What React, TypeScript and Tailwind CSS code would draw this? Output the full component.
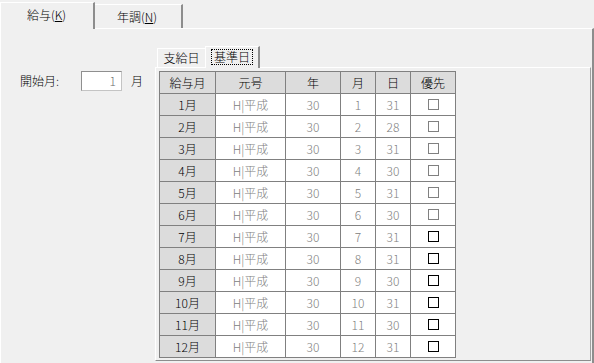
import React from 'react'

const days = [31, 28, 31, 30, 31, 30, 31, 31, 30, 31, 30, 31]

const headers = ['給与月', '元号', '年', '月', '日', '優先']

export default function App() {
  return (
    <div className="w-[594px] h-[363px] overflow-hidden bg-[#f0f0f0] flex flex-col font-['Noto_Sans_CJK_JP','Liberation_Sans',sans-serif] font-light text-[12px] leading-[14px] text-black">
      {/* outer tabs */}
      <div className="h-[28px] flex items-end shrink-0">
        <div className="relative z-10 w-[95px] h-[27px] -mb-px bg-[#f0f0f0] border-l border-t border-white border-r-2 border-r-[#8d8d8d] flex items-center justify-start pl-[26px] pb-[3px]">
          <span>給与(<span className="underline">K</span>)</span>
        </div>
        <div className="w-[88px] h-[24px] border-t border-white border-r-2 border-r-[#8d8d8d] flex items-center justify-start pl-[22px]">
          <span>年調(<span className="underline">N</span>)</span>
        </div>
      </div>

      {/* outer panel */}
      <div className="flex-1 flex border-t border-l border-white border-r-2 border-r-[#8d8d8d]">
        <div className="w-[154px] shrink-0 pt-[42px]">
          <div className="flex items-center h-[20px]">
            <span className="ml-[19px] w-[61px]">開始月:</span>
            <div className="w-[41px] h-[20px] bg-white border border-t-[#8f8f8f] border-l-[#8f8f8f] border-b-[#c4c4c4] border-r-[#c4c4c4] flex items-center justify-end pr-[5px] text-[#6d6d6d]">
              1
            </div>
            <span className="ml-[9px]">月</span>
          </div>
        </div>

        {/* inner tab control */}
        <div className="w-[436px] shrink-0 pt-[16px] flex flex-col">
          <div className="h-[22px] flex items-end pl-[2px] shrink-0">
            <div className="w-[48px] h-[19px] border-t border-l border-white flex items-center justify-center">
              支給日
            </div>
            <div className="relative z-10 w-[55px] h-[22px] -mb-px bg-[#f0f0f0] border-t border-l border-white border-r-2 border-r-[#8d8d8d] flex items-start justify-center pt-[2px]">
              <span className="px-[2px] h-[16px] flex items-center border border-dotted border-black">基準日</span>
            </div>
          </div>
          <div className="h-[294px] border-t border-l border-white border-b border-r border-b-[#8d8d8d] border-r-[#a0a0a0] pl-[3px] pt-[3px]">
            <div className="w-[297px] bg-[#808080] p-px grid grid-cols-[55px_69px_54px_34px_34px_44px] auto-rows-[21px] gap-px">
              {headers.map((h) => (
                <div key={h} className="bg-[#dcdcdc] flex items-center justify-center">
                  {h}
                </div>
              ))}
              {days.map((d, i) => (
                <React.Fragment key={i}>
                  <div className="bg-[#dcdcdc] flex items-center justify-center">{i + 1}月</div>
                  <div className="bg-white flex items-center justify-center text-[#808080]">H|平成</div>
                  <div className="bg-white flex items-center justify-center text-[#808080]">30</div>
                  <div className="bg-white flex items-center justify-center text-[#808080]">{i + 1}</div>
                  <div className="bg-white flex items-center justify-center text-[#808080]">{d}</div>
                  <div className="bg-white flex items-center justify-center">
                    <span className={`w-[11px] h-[11px] border ${i < 6 ? 'border-[#808080]' : 'border-black'}`} />
                  </div>
                </React.Fragment>
              ))}
            </div>
          </div>
        </div>
      </div>
    </div>
  )
}
